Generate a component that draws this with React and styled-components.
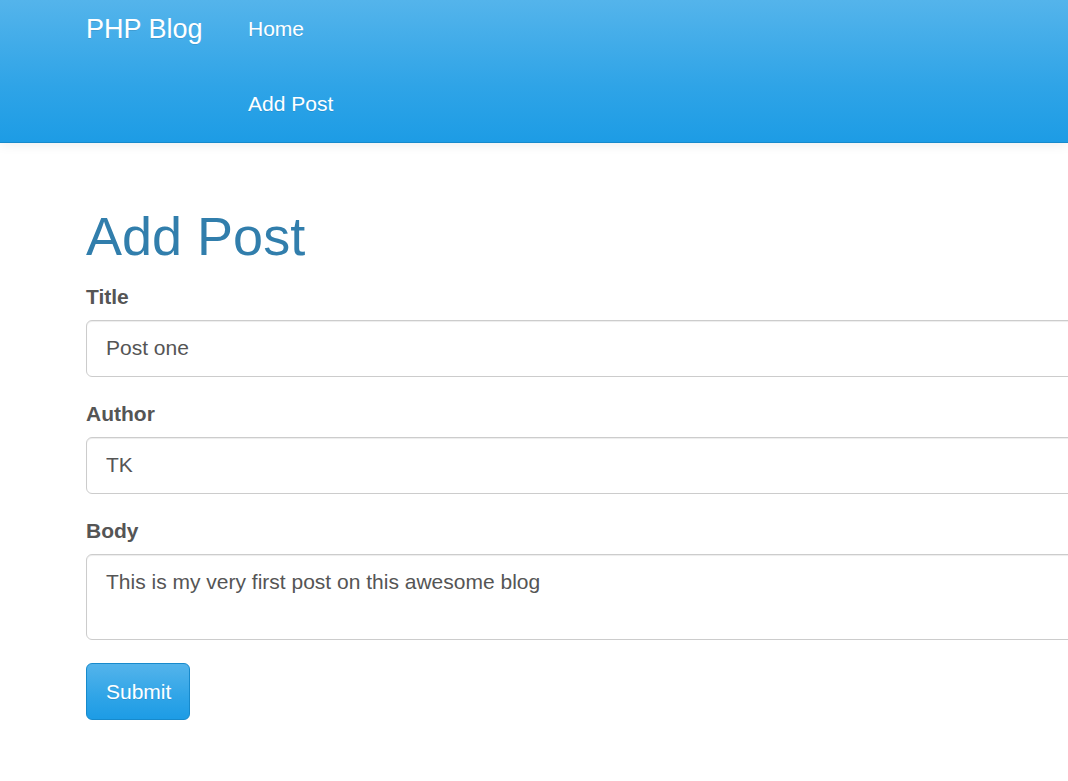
import React from "react";
import styled, { createGlobalStyle } from "styled-components";

const Global = createGlobalStyle`
  html, body { margin: 0; padding: 0; background: #fff; overflow-x: hidden; }
  body {
    font-family: "Liberation Sans", Arial, Helvetica, sans-serif;
    font-size: 21px;
    line-height: 1.42857;
    color: #555;
  }
  * { box-sizing: border-box; }
`;

const Navbar = styled.nav`
  background-image: linear-gradient(#54b4eb, #2fa4e7 60%, #1d9ce5);
  border-bottom: 1px solid #178acc;
  box-shadow: 0 1px 12px rgba(0, 0, 0, 0.08);
  position: relative;
  z-index: 1;
`;

const NavContainer = styled.div`
  width: 1755px;
  margin-left: 71px;
  padding: 0 15px;
  display: flex;
  align-items: flex-start;
`;

const Brand = styled.a`
  display: block;
  color: #fff;
  font-size: 27px;
  line-height: 30px;
  padding: 14px 0 0 0;
  width: 162px;
  text-decoration: none;
  text-shadow: 0 1px 0 rgba(0, 0, 0, 0.1);
`;

const NavList = styled.ul`
  list-style: none;
  margin: 0;
  padding: 0 0 23px 0;
  display: flex;
  flex-direction: column;
`;

const NavItem = styled.li`
  padding-top: ${(p) => (p.$first ? "14px" : "45px")};
`;

const NavLink = styled.a`
  display: block;
  color: #fff;
  font-size: 21px;
  line-height: 30px;
  text-decoration: none;
  text-shadow: 0 1px 0 rgba(0, 0, 0, 0.1);
`;

const Container = styled.main`
  width: 1755px;
  margin-left: 71px;
  padding: 34px 15px 30px;
`;

const Heading = styled.h1`
  color: #317eac;
  font-size: 54px;
  font-weight: 500;
  line-height: 1.1;
  margin: 30px 0 16px 0;
`;

const FormGroup = styled.div`
  margin-bottom: 22.5px;
`;

const Label = styled.label`
  display: block;
  font-weight: bold;
  font-size: 21px;
  line-height: 30px;
  margin-bottom: 7.5px;
  color: #555;
`;

const Input = styled.input`
  display: block;
  width: 100%;
  height: 57px;
  padding: 12px 18px 12px 19px;
  font-family: inherit;
  font-size: 21px;
  line-height: 30px;
  color: #555;
  background: #fff;
  border: 1.5px solid #ccc;
  border-radius: 6px;
  box-shadow: inset 0 1px 1px rgba(0, 0, 0, 0.075);
  outline: none;
`;

const TextArea = styled.textarea`
  display: block;
  width: 100%;
  height: 86px;
  padding: 12px 18px 12px 19px;
  font-family: inherit;
  font-size: 21px;
  line-height: 30px;
  color: #555;
  background: #fff;
  border: 1.5px solid #ccc;
  border-radius: 6px;
  box-shadow: inset 0 1px 1px rgba(0, 0, 0, 0.075);
  resize: none;
  outline: none;
`;

const Button = styled.button`
  display: inline-block;
  height: 57px;
  margin-top: 1px;
  padding: 12px 18px 12px 19px;
  font-family: inherit;
  font-size: 21px;
  line-height: 30px;
  color: #fff;
  background-image: linear-gradient(#54b4eb, #2fa4e7 60%, #1d9ce5);
  border: 1.5px solid #178acc;
  border-radius: 6px;
  text-shadow: 0 1px 0 rgba(0, 0, 0, 0.1);
  cursor: pointer;
`;

export default function App() {
  return (
    <>
      <Global />
      <Navbar>
        <NavContainer>
          <Brand href="#">PHP Blog</Brand>
          <NavList>
            <NavItem $first>
              <NavLink href="#">Home</NavLink>
            </NavItem>
            <NavItem>
              <NavLink href="#">Add Post</NavLink>
            </NavItem>
          </NavList>
        </NavContainer>
      </Navbar>
      <Container>
        <Heading>Add Post</Heading>
        <form onSubmit={(e) => e.preventDefault()}>
          <FormGroup>
            <Label htmlFor="title">Title</Label>
            <Input id="title" defaultValue="Post one" />
          </FormGroup>
          <FormGroup>
            <Label htmlFor="author">Author</Label>
            <Input id="author" defaultValue="TK" />
          </FormGroup>
          <FormGroup>
            <Label htmlFor="body">Body</Label>
            <TextArea
              id="body"
              defaultValue="This is my very first post on this awesome blog"
            />
          </FormGroup>
          <Button type="submit">Submit</Button>
        </form>
      </Container>
    </>
  );
}
